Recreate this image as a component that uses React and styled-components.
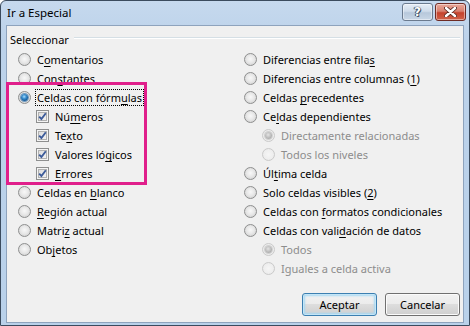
import React from "react";
import styled, { createGlobalStyle } from "styled-components";

const Global = createGlobalStyle`
  html, body { margin: 0; padding: 0; background: #ffffff; }
  #root { width: 470px; height: 326px; }
`;

const FONT = `"Segoe UI", "Noto Sans", "Open Sans", sans-serif`;

const Window = styled.div`
  box-sizing: border-box;
  width: 470px;
  height: 326px;
  border: 1px solid #3b4b5e;
  border-radius: 6px 6px 0 0;
  background: linear-gradient(180deg, #c6d9ee 0px, #bcd2ea 40px, #b9d1ea 100%);
  padding: 0 5px 2px 5px;
  display: flex;
  flex-direction: column;
  font-family: ${FONT};
  font-size: 11px;
  color: #000;
  overflow: hidden;
`;

const TitleBar = styled.div`
  height: 24px;
  display: flex;
  align-items: flex-start;
  padding-left: 1px;
`;

const Title = styled.div`
  flex: 1;
  line-height: 24px;
  font-size: 11.5px;
  color: #000;
`;

const CaptionGroup = styled.div`
  display: flex;
  gap: 2px;
  margin-top: 2px;
  margin-right: -2px;
`;

const CaptionButton = styled.div`
  box-sizing: border-box;
  width: 31px;
  height: 18px;
  border-radius: 3px;
  border: 1px solid ${(p) => (p.$close ? "#6e2b24" : "#6b7b8f")};
  background: ${(p) =>
    p.$close
      ? "linear-gradient(180deg, #e9a99b 0%, #d8806f 45%, #c5422c 55%, #d0624a 100%)"
      : "linear-gradient(180deg, #e6eef7 0%, #cfdcea 45%, #b7c8db 55%, #c9d7e6 100%)"};
  box-shadow: inset 0 0 0 1px rgba(255, 255, 255, 0.45);
  display: flex;
  align-items: center;
  justify-content: center;
`;

const HelpGlyph = styled.span`
  font-family: "DejaVu Sans", sans-serif;
  font-weight: bold;
  font-size: 12px;
  color: #ffffff;
  line-height: 1;
  text-shadow: 0 0 1px #33445a, 0 0 1px #33445a, 1px 1px 0 #4a5b70, -1px 0 0 #4a5b70;
`;

const Client = styled.div`
  box-sizing: border-box;
  flex: 1;
  background: #f0f0f0;
  border: 1px solid #8ea3bd;
  display: flex;
  flex-direction: column;
`;

const GroupHeader = styled.div`
  display: flex;
  align-items: center;
  gap: 5px;
  height: 17px;
  margin: 5px 3px 0 3px;
`;

const GroupLine = styled.div`
  flex: 1;
  border-top: 1px solid #d5dfe5;
  border-bottom: 1px solid #ffffff;
  margin-top: -3px;
`;

const Columns = styled.div`
  display: grid;
  grid-template-columns: 226px 1fr;
  padding-left: 11px;
  margin-top: 2px;
`;

const Column = styled.div`
  display: flex;
  flex-direction: column;
`;

const Row = styled.div`
  height: 19px;
  display: flex;
  align-items: center;
  gap: 5px;
  padding-left: ${(p) => p.$indent || 0}px;
  color: ${(p) => (p.$disabled ? "#8d8d8d" : "#000")};
  white-space: nowrap;
`;

const Label = styled.span`
  padding: 0 1px;
  line-height: 15px;
  outline: ${(p) => (p.$focus ? "1px dotted #000" : "none")};
  outline-offset: 0px;
`;

const Key = styled.span`
  text-decoration: underline;
  text-underline-offset: 2px;
  text-decoration-skip-ink: none;
`;

const RadioDot = styled.span`
  box-sizing: border-box;
  flex: none;
  width: 13px;
  height: 13px;
  border-radius: 50%;
  position: relative;
  border: 1px solid ${(p) => (p.$disabled ? "#cacaca" : "#8e8f8f")};
  background: ${(p) =>
    p.$disabled
      ? "radial-gradient(circle at 50% 50%, #f5f5f5 0%, #eeeeee 60%, #e2e2e2 100%)"
      : "radial-gradient(circle at 50% 45%, #f8f8f8 0%, #e8e8e8 45%, #c9c9c9 100%)"};
  &::after {
    content: "";
    display: ${(p) => (p.$checked ? "block" : "none")};
    position: absolute;
    left: 2px;
    top: 2px;
    width: 7px;
    height: 7px;
    border-radius: 50%;
    background: ${(p) =>
      p.$disabled
        ? "radial-gradient(circle at 45% 40%, #e4e4e4 0%, #b5b5b5 60%, #a0a0a0 100%)"
        : "radial-gradient(circle at 45% 38%, #a9dcfb 0%, #3b8fcf 35%, #145a99 70%, #0b3a6b 100%)"};
    box-shadow: 0 0 0 1px ${(p) => (p.$disabled ? "#d0d0d0" : "#6f98bd")};
  }
`;

const CheckBox = styled.span`
  box-sizing: border-box;
  flex: none;
  width: 13px;
  height: 13px;
  border: 1px solid #8e8f8f;
  background: #f4f4f4;
  box-shadow: inset 0 0 0 1px #f4f4f4, inset 0 0 0 2px #b1b1b1;
  display: flex;
  align-items: center;
  justify-content: center;
  background-image: linear-gradient(135deg, #d8d8d8, #f7f7f7);
`;

const Highlight = styled.div`
  position: relative;
  display: flex;
  flex-direction: column;
  &::after {
    content: "";
    position: absolute;
    left: -12px;
    top: -6px;
    width: 141px;
    bottom: -2px;
    box-sizing: border-box;
    border: 3px solid #e01f8b;
    pointer-events: none;
  }
`;

const Footer = styled.div`
  margin-top: auto;
  display: flex;
  justify-content: flex-end;
  gap: 8px;
  padding: 0 3px 6px 0;
`;

const Button = styled.div`
  box-sizing: border-box;
  width: 75px;
  height: 23px;
  border-radius: 3px;
  border: 1px solid ${(p) => (p.$default ? "#3c7fb1" : "#707070")};
  background: linear-gradient(180deg, #f2f2f2 0%, #ebebeb 49%, #dddddd 50%, #cfcfcf 100%);
  box-shadow: ${(p) =>
    p.$default ? "inset 0 0 0 1px #c4e5f6, inset 0 0 2px 2px #a6d8f3" : "inset 0 0 0 1px #fbfbfb"};
  display: flex;
  align-items: center;
  justify-content: center;
  font-size: 11px;
`;

function Radio({ checked, disabled, indent, focus, children }) {
  return (
    <Row $indent={indent} $disabled={disabled}>
      <RadioDot $checked={checked} $disabled={disabled} />
      <Label $focus={focus}>{children}</Label>
    </Row>
  );
}

function Check({ indent, children }) {
  return (
    <Row $indent={indent}>
      <CheckBox>
        <svg width="9" height="9" viewBox="0 0 9 9">
          <path d="M1.2 4.6 L3.4 7 L7.8 1.2" fill="none" stroke="#3d5c9a" strokeWidth="1.9" strokeLinejoin="miter" />
        </svg>
      </CheckBox>
      <Label>{children}</Label>
    </Row>
  );
}

export default function App() {
  return (
    <>
      <Global />
      <Window>
        <TitleBar>
          <Title>Ir a Especial</Title>
          <CaptionGroup>
            <CaptionButton>
              <HelpGlyph>?</HelpGlyph>
            </CaptionButton>
            <CaptionButton $close>
              <svg width="13" height="10" viewBox="0 0 13 10">
                <path d="M2 1 L11 9 M11 1 L2 9" stroke="#5a2a22" strokeWidth="4.2" strokeLinecap="round" />
                <path d="M2 1 L11 9 M11 1 L2 9" stroke="#ffffff" strokeWidth="2.4" strokeLinecap="round" />
              </svg>
            </CaptionButton>
          </CaptionGroup>
        </TitleBar>
        <Client>
          <GroupHeader>
            <span>Seleccionar</span>
            <GroupLine />
          </GroupHeader>
          <Columns>
            <Column>
              <Radio>C<Key>o</Key>mentarios</Radio>
              <Radio>Con<Key>s</Key>tantes</Radio>
              <Highlight>
                <Radio checked focus>Celdas con fórm<Key>u</Key>las</Radio>
                <Check indent={18}>Nú<Key>m</Key>eros</Check>
                <Check indent={18}>Te<Key>x</Key>to</Check>
                <Check indent={18}>Valores ló<Key>g</Key>icos</Check>
                <Check indent={18}><Key>E</Key>rrores</Check>
              </Highlight>
              <Radio>Celdas en <Key>b</Key>lanco</Radio>
              <Radio><Key>R</Key>egión actual</Radio>
              <Radio>Matri<Key>z</Key> actual</Radio>
              <Radio>Ob<Key>j</Key>etos</Radio>
            </Column>
            <Column>
              <Radio>Diferencias entre fila<Key>s</Key></Radio>
              <Radio>Diferencias entre columnas (<Key>1</Key>)</Radio>
              <Radio>Celdas <Key>p</Key>recedentes</Radio>
              <Radio>Ce<Key>l</Key>das dependientes</Radio>
              <Radio indent={18} checked disabled>Directamente relacionadas</Radio>
              <Radio indent={18} disabled>Todos los niveles</Radio>
              <Radio>Úl<Key>t</Key>ima celda</Radio>
              <Radio>Solo celdas visibles (<Key>2</Key>)</Radio>
              <Radio>Celdas con <Key>f</Key>ormatos condicionales</Radio>
              <Radio>Celdas con vali<Key>d</Key>ación de datos</Radio>
              <Radio indent={18} checked disabled>Todos</Radio>
              <Radio indent={18} disabled>Iguales a celda activa</Radio>
            </Column>
          </Columns>
          <Footer>
            <Button $default>Aceptar</Button>
            <Button>Cancelar</Button>
          </Footer>
        </Client>
      </Window>
    </>
  );
}
